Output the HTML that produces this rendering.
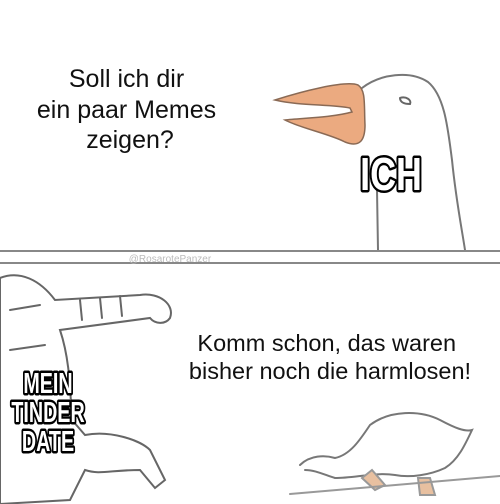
<!DOCTYPE html>
<html><head><meta charset="utf-8"><style>
body{margin:0;width:500px;height:504px;overflow:hidden;background:#fff;}
svg{display:block}
.t{font-family:"Liberation Sans",Arial,sans-serif;fill:#111;}
.m{font-family:"Liberation Sans Narrow","Liberation Sans",sans-serif;font-weight:bold;fill:#fff;stroke:#000;stroke-width:5;stroke-linejoin:round;paint-order:stroke;}
</style></head><body>
<svg width="500" height="504" viewBox="0 0 500 504">
<rect width="500" height="504" fill="#fff"/>
<!-- top goose -->
<g fill="none" stroke="#777" stroke-width="2" stroke-linecap="round">
<path d="M378 250 L377 190 M362 88 C380 74 410 70 428 82 C445 96 448 130 452 160 C456 200 462 230 465 250" fill="#fff"/>
<path d="M358 85 C345 80 300 92 275 100 C300 106 330 104 350 108 L352 112 C330 118 300 118 285 120 C300 128 330 134 345 142 C360 148 365 140 365 125 C364 105 366 90 358 85 Z" fill="#ebaa80" stroke="#8a6a55" stroke-width="1.5"/>
<path d="M400 98 C406 96 412 100 410 104 C404 104 400 102 400 98" stroke="#666"/>
</g>
<!-- dividers -->
<rect x="0" y="250" width="500" height="2" fill="#888"/>
<rect x="0" y="262" width="500" height="2" fill="#888"/>
<text x="170" y="262" text-anchor="middle" class="t" style="font-size:10px;fill:#bbb">@RosarotePanzer</text>
<!-- bottom figure -->
<g fill="#fff" stroke="#666" stroke-width="2" stroke-linecap="round">
<path d="M0 278 C20 270 40 280 55 300 L140 295 C160 292 175 305 170 318 C165 325 155 324 150 318 L60 330 C70 360 70 390 72 420 L85 435 C110 430 140 440 150 450 L165 480 L155 488 L140 470 C110 470 100 475 85 470 L70 500 L0 504 Z"/>
<path d="M10 310 L40 305 M10 350 L45 345 M80 300 L82 320 M100 298 L102 318 M120 296 L122 316"/>
</g>
<!-- bottom goose -->
<g fill="#fff" stroke="#777" stroke-width="2" stroke-linecap="round">
<path d="M300 465 C310 455 325 455 335 458 C350 455 360 440 370 425 C390 410 420 410 440 420 C455 428 465 432 472 430 C465 445 458 460 445 468 C430 475 410 478 395 475 C375 472 355 478 335 478 C325 475 315 470 305 470"/>
<path d="M362 478 L372 470 L385 485 L375 490 Z M418 478 L430 478 L435 495 L420 495 Z" fill="#e8c0a0" stroke="#999"/>
<path d="M290 494 C360 488 430 482 500 476" fill="none" stroke="#999"/>
</g>
<!-- text -->
<text class="t" style="font-size:25px" text-anchor="middle">
<tspan x="130" y="87">Soll ich dir</tspan>
<tspan x="130" y="118">ein paar Memes</tspan>
<tspan x="130" y="148">zeigen?</tspan>
</text>
<text class="t" style="font-size:23.5px" text-anchor="middle">
<tspan x="330" y="351">Komm schon, das waren</tspan>
<tspan x="330" y="379">bisher noch die harmlosen!</tspan>
</text>
<g transform="translate(391 0) scale(0.78 1)">
<text class="m" x="0" y="190" text-anchor="middle" style="font-size:46px">ICH</text>
</g>
<g transform="translate(48 0) scale(0.68 1)" class="m" style="font-size:29px" text-anchor="middle">
<text x="0" y="393">MEIN</text>
<text x="0" y="422">TINDER</text>
<text x="0" y="451">DATE</text>
</g>
</svg>
</body></html>
